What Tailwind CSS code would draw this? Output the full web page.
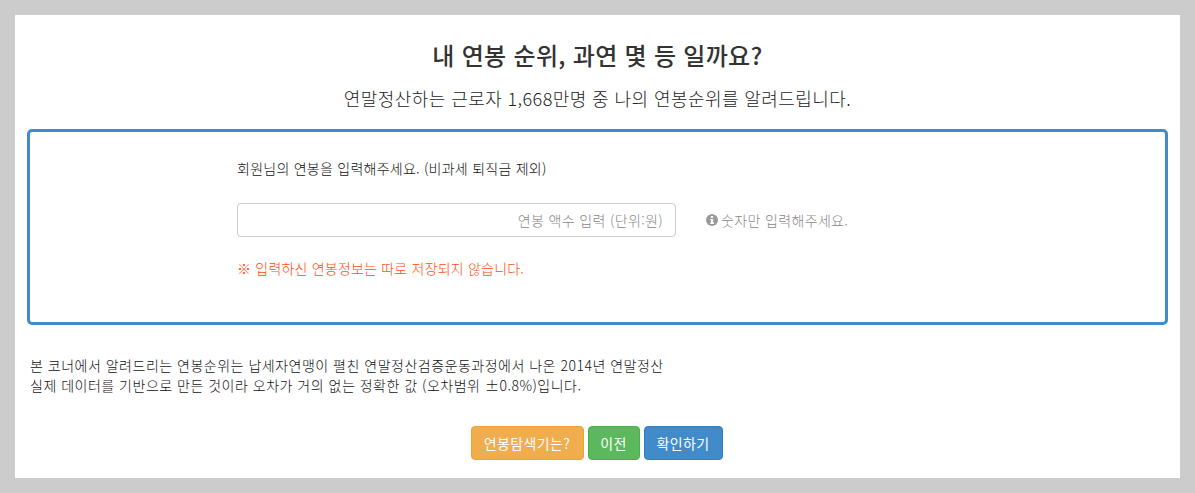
<!DOCTYPE html>
<html lang="ko">
<head>
<meta charset="UTF-8" />
<title>연봉 순위</title>
<script src="https://cdn.jsdelivr.net/npm/@tailwindcss/browser@4"></script>
</head>
<body class="bg-[#cccccc] font-['Noto_Sans_CJK_KR',sans-serif] text-[#333333]">
<div class="h-[493px] overflow-hidden p-[15px]">
  <div class="h-[463px] w-[1165px] bg-white px-3">
    <h1 class="pt-[23px] text-center text-[24px] leading-[34px] font-medium tracking-[0.3px]">내 연봉 순위, 과연 몇 등 일까요?</h1>
    <p class="mt-[13px] text-center text-[18px] leading-[26px] font-light tracking-[0.42px] text-[#222222]">연말정산하는 근로자 1,668만명 중 나의 연봉순위를 알려드립니다.</p>

    <!-- 입력 박스 -->
    <div class="mt-[18px] h-[196px] w-[1141px] rounded-[5px] border-[3px] border-[#428bca] pt-[26px] pl-[207px]">
      <p class="text-[14px] leading-[20px] font-light tracking-[0.25px] text-[#111111]">회원님의 연봉을 입력해주세요. (비과세 퇴직금 제외)</p>
      <div class="mt-[25px] flex items-center">
        <input type="text" placeholder="연봉 액수 입력 (단위:원)" class="h-[34px] w-[439px] rounded border border-[#cccccc] px-3 text-right text-[14px] font-light tracking-[0.35px] placeholder:text-[#888888]" />
        <span class="ml-[30px] flex items-center gap-[3px] text-[14px] font-light tracking-[0.35px] text-[#888888]">
          <svg class="h-[12px] w-[12px]" viewBox="0 0 12 12"><circle cx="6" cy="6" r="6" fill="#999999" /><rect x="4.8" y="2" width="2.4" height="1.9" fill="#fff" /><path d="M4.2 5h3v3.6h.8V10H4.2V8.6h.8V6.2h-.8z" fill="#fff" /></svg>
          숫자만 입력해주세요.
        </span>
      </div>
      <p class="mt-[21px] text-[14px] leading-[20px] font-light tracking-[0.2px] text-[#ff4d0d]">※ 입력하신 연봉정보는 따로 저장되지 않습니다.</p>
    </div>

    <!-- 안내 문구 -->
    <p class="mt-[30px] pl-[3px] text-[14px] leading-[20px] font-light tracking-[0.5px] text-[#111111]">
      본 코너에서 알려드리는 연봉순위는 납세자연맹이 펼친 연말정산검증운동과정에서 나온 2014년 연말정산<br />
      실제 데이터를 기반으로 만든 것이라 오차가 거의 없는 정확한 값 (오차범위 ±0.8%)입니다.
    </p>

    <div class="mt-[31px] flex justify-center gap-[4px] pr-[2px] text-[14px] tracking-[0.35px] text-white">
      <button class="h-[34px] w-[113px] rounded border border-[#eea236] bg-[#f0ad4e]">연봉탐색기는?</button>
      <button class="h-[34px] w-[52px] rounded border border-[#4cae4c] bg-[#5cb85c]">이전</button>
      <button class="h-[34px] w-[79px] rounded border border-[#357ebd] bg-[#428bca]">확인하기</button>
    </div>
  </div>
</div>
</body>
</html>
